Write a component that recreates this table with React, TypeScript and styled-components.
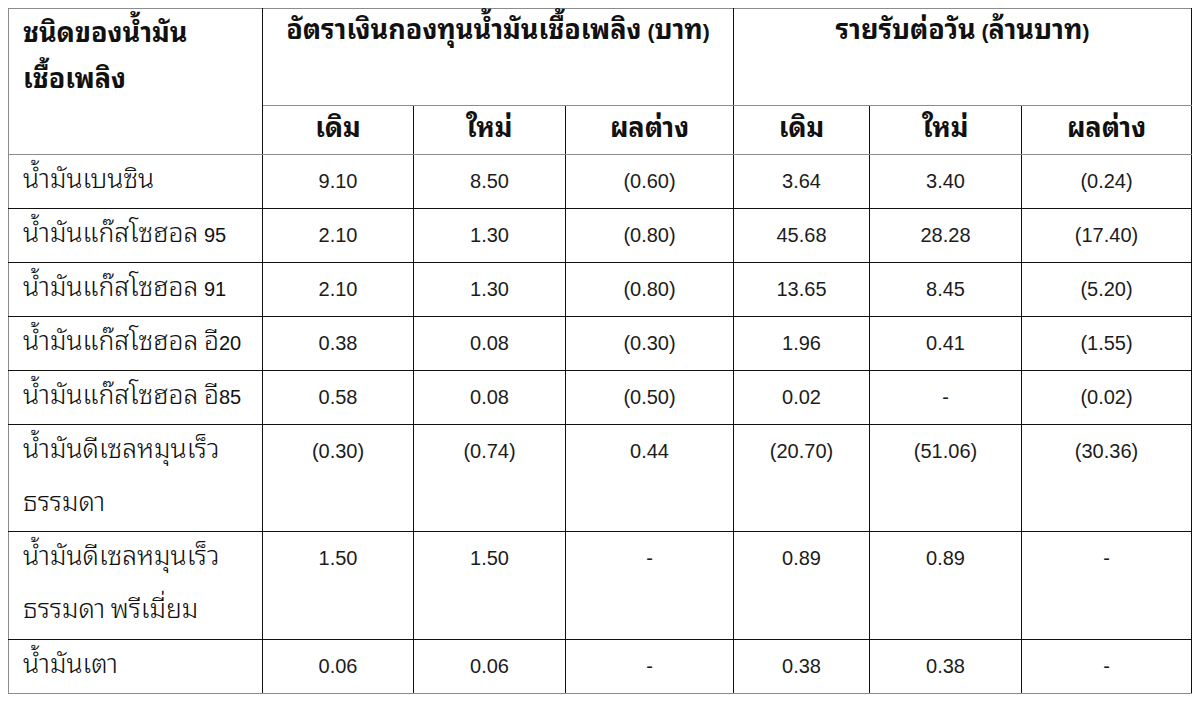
import React from "react";
import styled, { createGlobalStyle } from "styled-components";

const GlobalStyle = createGlobalStyle`
  body {
    margin: 8px;
    background: #fff;
    font-family: "Liberation Sans", "Noto Sans Thai Looped", sans-serif;
    color: #111;
  }
`;

const gray = "#8c8c8c";
const ink = "#111";

const Table = styled.table`
  width: 1183px;
  table-layout: fixed;
  border-collapse: collapse;

  th,
  td {
    border: 1px solid ${ink};
  }
  thead th {
    border-top-color: ${gray};
    border-bottom-color: ${gray};
  }
  tr > :first-child {
    border-left-color: ${gray};
  }
  tbody tr:last-child td {
    border-bottom-color: ${gray};
  }
`;

const Thai = styled.span<{ $size: number; $light?: boolean }>`
  font-family: "Noto Sans Thai Looped", Loma, sans-serif;
  font-size: ${(p) => p.$size}px;
  font-weight: ${(p) => (p.$light ? 300 : "inherit")};
  line-height: 1;
`;

const HeadCell = styled.th<{ $left?: boolean }>`
  font-size: 21px;
  font-weight: bold;
  line-height: 46px;
  text-align: ${(p) => (p.$left ? "left" : "center")};
  vertical-align: top;
  padding: ${(p) => (p.$left ? "3px 0 0 14px" : "0")};
`;

const SubCell = styled.th`
  font-size: 21px;
  font-weight: bold;
  line-height: 46px;
  text-align: center;
  vertical-align: middle;
  padding: 0;
`;

const Row = styled.tr<{ $h: number }>`
  height: ${(p) => p.$h}px;
`;

const NameCell = styled.td`
  font-size: 20px;
  line-height: 53px;
  vertical-align: top;
  padding: 0 0 0 14px;
  white-space: nowrap;
`;

const NumCell = styled.td`
  font-size: 20px;
  line-height: 53px;
  vertical-align: top;
  text-align: center;
  padding: 0;
  color: #1c1c1c;
`;

const widths = [254, 151, 152, 168, 136, 152, 170];

type Item = { name: string[]; values: string[]; h: number };

const rows: Item[] = [
  { name: ["น้ำมันเบนซิน"], values: ["9.10", "8.50", "(0.60)", "3.64", "3.40", "(0.24)"], h: 54 },
  { name: ["น้ำมันแก๊สโซฮอล 95"], values: ["2.10", "1.30", "(0.80)", "45.68", "28.28", "(17.40)"], h: 54 },
  { name: ["น้ำมันแก๊สโซฮอล 91"], values: ["2.10", "1.30", "(0.80)", "13.65", "8.45", "(5.20)"], h: 54 },
  { name: ["น้ำมันแก๊สโซฮอล อี20"], values: ["0.38", "0.08", "(0.30)", "1.96", "0.41", "(1.55)"], h: 54 },
  { name: ["น้ำมันแก๊สโซฮอล อี85"], values: ["0.58", "0.08", "(0.50)", "0.02", "-", "(0.02)"], h: 54 },
  { name: ["น้ำมันดีเซลหมุนเร็ว", "ธรรมดา"], values: ["(0.30)", "(0.74)", "0.44", "(20.70)", "(51.06)", "(30.36)"], h: 106 },
  { name: ["น้ำมันดีเซลหมุนเร็ว", "ธรรมดา พรีเมี่ยม"], values: ["1.50", "1.50", "-", "0.89", "0.89", "-"], h: 108 },
  { name: ["น้ำมันเตา"], values: ["0.06", "0.06", "-", "0.38", "0.38", "-"], h: 54 },
];

const sub = ["เดิม", "ใหม่", "ผลต่าง"];

// Thai runs get the looped Thai face at a larger size, digits stay Arial-sized
function Mixed({ text, size = 26.5, light }: { text: string; size?: number; light?: boolean }) {
  return (
    <>
      {text.split(/([\u0E00-\u0E7F]+)/).map((part, i) =>
        /[\u0E00-\u0E7F]/.test(part) ? (
          <Thai key={i} $size={size} $light={light}>
            {part}
          </Thai>
        ) : (
          part
        )
      )}
    </>
  );
}

export default function App() {
  return (
    <>
      <GlobalStyle />
      <Table>
        <colgroup>
          {widths.map((w, i) => (
            <col key={i} style={{ width: w }} />
          ))}
        </colgroup>
        <thead>
          <Row $h={97}>
            <HeadCell $left rowSpan={2}>
              <Mixed text="ชนิดของน้ำมัน" size={27} />
              <br />
              <Mixed text="เชื้อเพลิง" size={27} />
            </HeadCell>
            <HeadCell colSpan={3}>
              <Mixed text="อัตราเงินกองทุนน้ำมันเชื้อเพลิง (บาท)" size={27} />
            </HeadCell>
            <HeadCell colSpan={3}>
              <Mixed text="รายรับต่อวัน (ล้านบาท)" size={27} />
            </HeadCell>
          </Row>
          <Row $h={49}>
            {[...sub, ...sub].map((s, i) => (
              <SubCell key={i}>
                <Mixed text={s} size={27} />
              </SubCell>
            ))}
          </Row>
        </thead>
        <tbody>
          {rows.map((r) => (
            <Row key={r.name.join()} $h={r.h}>
              <NameCell>
                {r.name.map((n, i) => (
                  <React.Fragment key={i}>
                    {i > 0 && <br />}
                    <Mixed text={n} light />
                  </React.Fragment>
                ))}
              </NameCell>
              {r.values.map((v, i) => (
                <NumCell key={i}>{v}</NumCell>
              ))}
            </Row>
          ))}
        </tbody>
      </Table>
    </>
  );
}
